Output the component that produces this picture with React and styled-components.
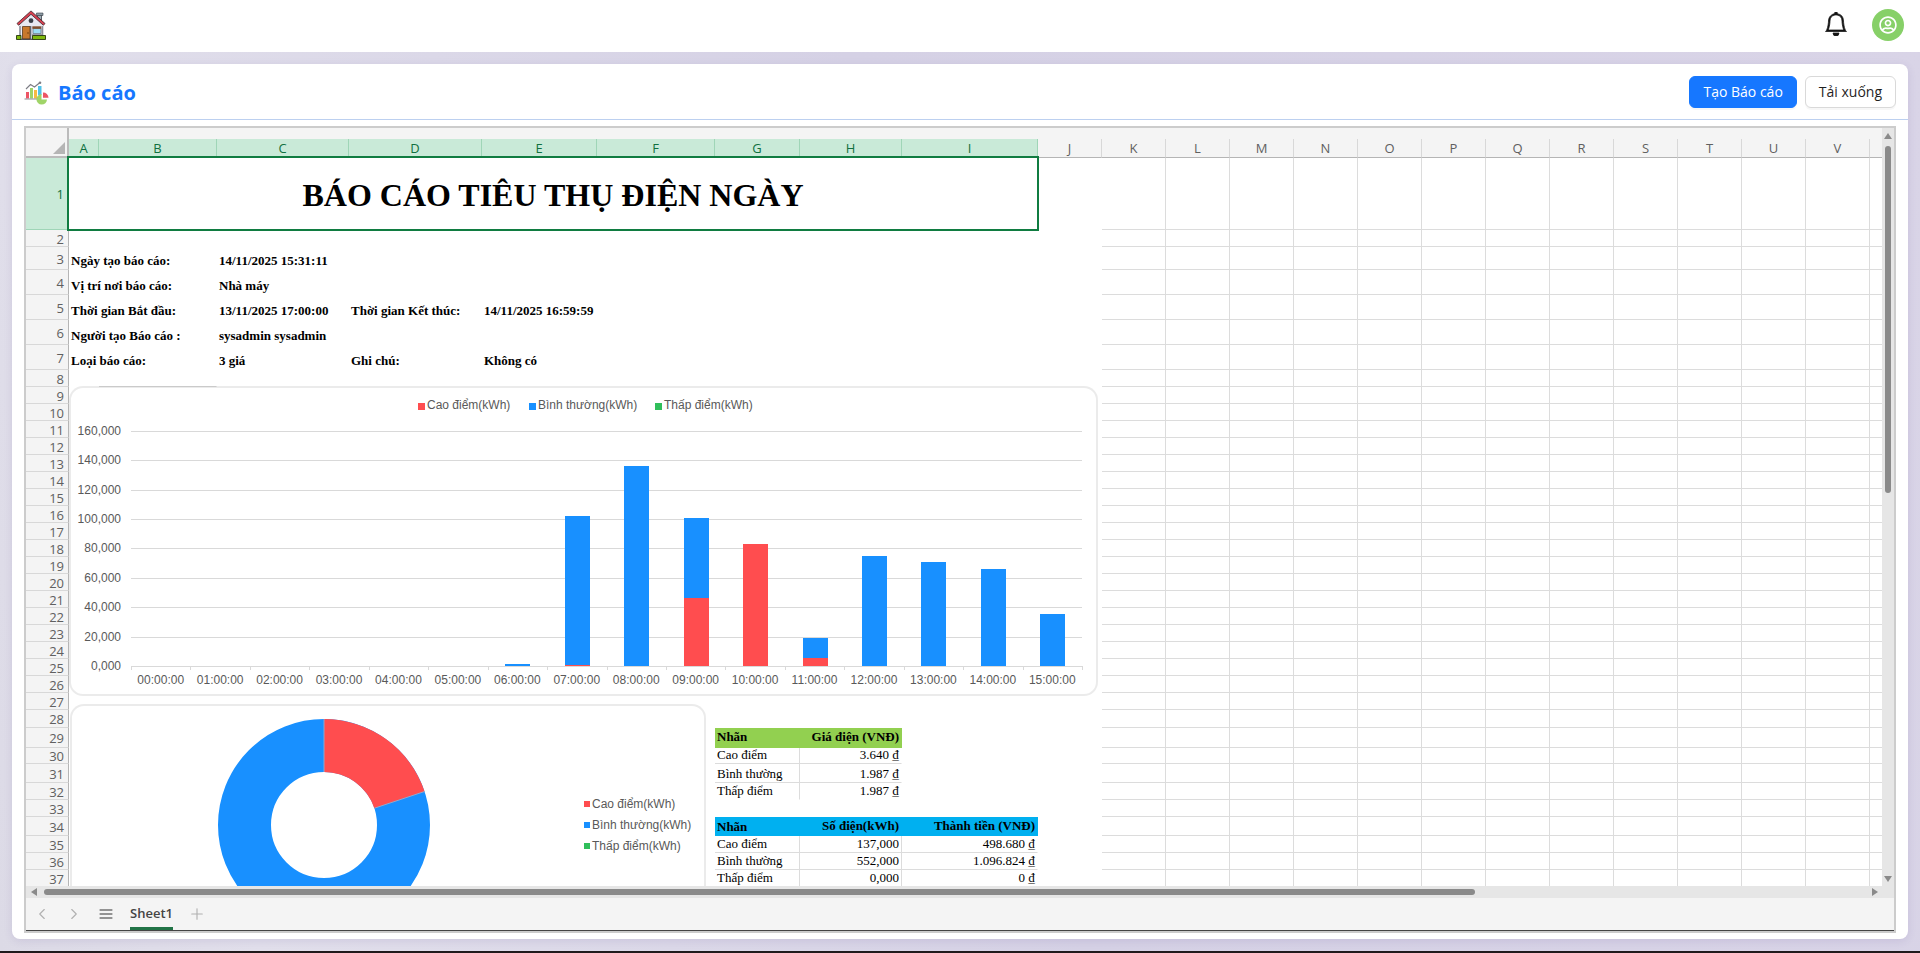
import React from 'react';
import styled, { createGlobalStyle, css } from 'styled-components';
import { BsBell } from 'react-icons/bs';
import { FaRegUserCircle } from 'react-icons/fa';
import { FiChevronLeft, FiChevronRight, FiMenu, FiPlus } from 'react-icons/fi';

const RED = '#ff4d4f';
const BLUE = '#1890ff';
const GREEN = '#30bf5b';

const GlobalStyle = createGlobalStyle`
  * {
    box-sizing: border-box;
  }

  html,
  body,
  #root {
    height: 100%;
  }

  body {
    margin: 0;
    font-family: 'Open Sans', 'Noto Sans', sans-serif;
    font-size: 14px;
    color: #1f1f1f;
  }

  button {
    font-family: inherit;
  }
`;

const Page = styled.div`
  display: flex;
  flex-direction: column;
  height: 100vh;
  overflow: hidden;
  border-bottom: 2px solid #201a1c;
  background: linear-gradient(75deg, #dcdae6 0%, #e1dfeb 12%, #d5d1e5 50%, #d9d4e7 100%);
`;

const TopBar = styled.header`
  display: flex;
  flex: none;
  align-items: center;
  justify-content: space-between;
  height: 52px;
  padding: 0 16px 2px;
  background: #fff;
`;

const HomeLink = styled.a`
  display: flex;
`;

const TopActions = styled.div`
  display: flex;
  align-items: center;
  gap: 24px;
`;

const IconButton = styled.button`
  display: flex;
  align-items: center;
  justify-content: center;
  width: 24px;
  height: 32px;
  padding: 0 0 2px;
  border: none;
  background: none;
  color: #141414;
  cursor: pointer;
`;

const Avatar = styled(IconButton)`
  width: 32px;
  padding: 0;
  border-radius: 50%;
  background: #87d068;
  color: #fff;
`;

const Card = styled.main`
  display: flex;
  flex: 1;
  flex-direction: column;
  min-height: 0;
  margin: 12px;
  border-radius: 8px;
  background: #fff;
  box-shadow: 0 2px 8px rgba(80, 60, 140, 0.12);
`;

const CardHeader = styled.div`
  display: flex;
  flex: none;
  align-items: center;
  justify-content: space-between;
  height: 56px;
  padding: 0 12px;
  border-bottom: 1px solid #bcd0f0;
`;

const CardTitle = styled.h1`
  display: flex;
  align-items: center;
  gap: 8px;
  margin: 0;
  padding-top: 2px;
  font-size: 20px;
  line-height: 24px;
  font-weight: 700;
  color: #1677ff;
`;

const ButtonRow = styled.div`
  display: flex;
  gap: 8px;
`;

const Button = styled.button`
  height: 32px;
  padding: 0 13px;
  border: 1px solid ${props => (props.$primary ? '#1677ff' : '#d9d9d9')};
  border-radius: 6px;
  background: ${props => (props.$primary ? '#1677ff' : '#fff')};
  box-shadow: 0 2px 0 rgba(5, 5, 5, 0.03);
  color: ${props => (props.$primary ? '#fff' : '#1f1f1f')};
  font-size: 14px;
  cursor: pointer;
`;

const Workbook = styled.section`
  display: flex;
  flex: 1;
  flex-direction: column;
  min-height: 0;
  margin: 6px 12px;
  border: 2px solid #ccc;
  background: #f4f4f4;
`;

const SheetArea = styled.div`
  display: grid;
  flex: 1;
  grid-template-columns: minmax(0, 1fr) 12px;
  grid-template-rows: minmax(0, 1fr) 12px;
  min-height: 0;
  background: #e6e6e6;
`;

const Viewport = styled.div`
  position: relative;
  overflow: hidden;
  background: #fff;
`;

const Grid = styled.table`
  border-collapse: separate;
  border-spacing: 0;
  table-layout: fixed;
  width: 0;
`;

const OutlineBar = styled.td`
  height: 11px;
  padding: 0;
  background: #f4f4f4;
`;

const Corner = styled.td`
  padding: 0 2px 2px 0;
  border-right: 2px solid #bbb;
  border-bottom: 2px solid #bbb;
  background: #f4f4f4;
  text-align: right;
  vertical-align: bottom;
  line-height: 0;
`;

const ColHead = styled.th`
  height: 19px;
  padding: 0;
  border-right: 1px solid ${props => (props.$selected ? '#9fd5b7' : '#d8d8d8')};
  border-bottom: 1px solid #b5b5b5;
  background: ${props => (props.$selected ? '#c9ead8' : '#f4f4f4')};
  color: ${props => (props.$selected ? '#107040' : '#606060')};
  font-size: 13px;
  line-height: 16px;
  font-weight: 400;
`;

const RowHead = styled.th`
  height: ${props => props.$height}px;
  padding: 2px 4px 0 0;
  border-right: 1px solid #b5b5b5;
  border-bottom: 1px solid ${props => (props.$selected ? '#9fd5b7' : '#d8d8d8')};
  background: ${props => (props.$selected ? '#c9ead8' : '#f4f4f4')};
  color: ${props => (props.$selected ? '#107040' : '#606060')};
  font-size: 13px;
  line-height: 13px;
  font-weight: 400;
  text-align: right;
`;

const lines = {
  b: css`border-bottom-color: #dcdcdc;`,
  r: css`border-right-color: #dcdcdc;`,
  br: css`
    border-right-color: #dcdcdc;
    border-bottom-color: #dcdcdc;
  `,
};

const Cell = styled.td`
  padding: ${props => (props.$title ? '2px 2px 0' : '0 2px 1px')};
  border: 0 solid transparent;
  border-right-width: 1px;
  border-bottom-width: 1px;
  ${props => lines[props.$lines]}
  background: ${props => props.$fill || 'none'};
  color: #000;
  font-family: 'Liberation Serif', serif;
  font-size: ${props => (props.$title ? 32 : 13)}px;
  line-height: ${props => (props.$title ? 36 : 14)}px;
  font-weight: ${props => (props.$bold ? 700 : 400)};
  text-align: ${props => props.$align || 'left'};
  vertical-align: ${props => (props.$middle ? 'middle' : 'bottom')};
  white-space: nowrap;
`;

/* floats over A1:I1 */
const Selection = styled.div`
  position: absolute;
  top: 28px;
  left: 41px;
  width: 972px;
  height: 75px;
  border: 2px solid #107c41;
  pointer-events: none;
`;

const ChartFrame = styled.figure`
  position: absolute;
  top: ${props => props.$top}px;
  left: ${props => props.$left}px;
  width: ${props => props.$width}px;
  height: ${props => props.$height}px;
  margin: 0;
  overflow: hidden;
  border: 2px solid rgba(0, 0, 0, 0.08);
  border-radius: 14px;
  background: #fff;
  background-clip: padding-box;

  svg {
    display: block;
    font-family: 'Liberation Sans', sans-serif;
    font-size: 12px;
    fill: #595959;
  }
`;

const VScroll = styled.div`
  display: flex;
  flex-direction: column;
  align-items: center;
  justify-content: space-between;
  padding: 4px 0 3px;
`;

const HScroll = styled.div`
  display: flex;
  align-items: center;
  justify-content: space-between;
  padding: 0 3px 0 4px;
`;

const Track = styled.div`
  flex: 1;
  margin: 6px;

  &::before {
    content: '';
    display: block;
    width: ${props => (props.$vertical ? '6px' : '78.6%')};
    height: ${props => (props.$vertical ? '48%' : '6px')};
    border-radius: 3px;
    background: #8a8a8a;
  }
`;

const TabBar = styled.nav`
  display: flex;
  flex: none;
  align-items: center;
  height: 33px;
  border-bottom: 1px solid #444;
`;

const TabButton = styled.button`
  display: flex;
  align-items: center;
  justify-content: center;
  width: 32px;
  height: 30px;
  padding: 0;
  border: none;
  background: none;
  color: ${props => (props.$dark ? '#333' : '#b0b0b0')};
`;

const SheetTab = styled.button`
  align-self: stretch;
  margin: 0 8px;
  padding: 0;
  border: none;
  border-bottom: 3px solid #217346;
  background: none;
  color: #444;
  font-size: 13px;
  font-weight: 600;
`;

const COLUMNS = [30, 118, 132, 133, 115, 118, 85, 102, 136].concat(Array(14).fill(64));
const ROW_HEIGHTS = {
  1: 72, 3: 23, 4: 25, 5: 25, 6: 25, 7: 25, 28: 18, 29: 20, 30: 16, 31: 19, 34: 19,
};
const ROW_COUNT = 37;

const meta = (text, span) => ({ text, span, $bold: true });
const head = (text, fill, $align, $middle = true) => ({ text, $fill: fill, $align, $bold: true, $middle });
const LIME = '#92d050';
const SKY = '#00b0f0';

const CELLS = {
  A1: { text: 'BÁO CÁO TIÊU THỤ ĐIỆN NGÀY', span: 9, $title: true, $bold: true, $align: 'center', $middle: true },
  A3: meta('Ngày tạo báo cáo:', 2),
  C3: meta('14/11/2025 15:31:11'),
  A4: meta('Vị trí nơi báo cáo:', 2),
  C4: meta('Nhà máy'),
  A5: meta('Thời gian Bắt đầu:', 2),
  C5: meta('13/11/2025 17:00:00'),
  D5: meta('Thời gian Kết thúc:'),
  E5: meta('14/11/2025 16:59:59'),
  A6: meta('Người tạo Báo cáo :', 2),
  C6: meta('sysadmin sysadmin'),
  A7: meta('Loại báo cáo:', 2),
  C7: meta('3 giá'),
  D7: meta('Ghi chú:'),
  E7: meta('Không có'),
  B8: { $lines: 'b' },
  G29: head('Nhãn', LIME),
  H29: head('Giá điện (VNĐ)', LIME, 'right'),
  G30: { text: 'Cao điểm', $lines: 'br' },
  H30: { text: '3.640 ₫', $align: 'right', $lines: 'b' },
  G31: { text: 'Bình thường', $lines: 'br' },
  H31: { text: '1.987 ₫', $align: 'right', $lines: 'b' },
  G32: { text: 'Thấp điểm', $lines: 'r' },
  H32: { text: '1.987 ₫', $align: 'right' },
  G34: head('Nhãn', SKY, 'left', false),
  H34: head('Số điện(kWh)', SKY, 'right'),
  I34: head('Thành tiền (VNĐ)', SKY, 'right'),
  G35: { text: 'Cao điểm', $lines: 'br' },
  H35: { text: '137,000', $align: 'right', $lines: 'br' },
  I35: { text: '498.680 ₫', $align: 'right', $lines: 'b' },
  G36: { text: 'Bình thường', $lines: 'br' },
  H36: { text: '552,000', $align: 'right', $lines: 'br' },
  I36: { text: '1.096.824 ₫', $align: 'right', $lines: 'b' },
  G37: { text: 'Thấp điểm', $lines: 'br' },
  H37: { text: '0,000', $align: 'right', $lines: 'br' },
  I37: { text: '0 ₫', $align: 'right', $lines: 'b' },
};

const SERIES = [
  { name: 'Cao điểm(kWh)', color: RED },
  { name: 'Bình thường(kWh)', color: BLUE },
  { name: 'Thấp điểm(kWh)', color: GREEN },
];

// [peak, normal] in MWh per hour
const HOURS = [
  [0, 0], [0, 0], [0, 0], [0, 0], [0, 0], [0, 0], [0, 1.4], [0.7, 101.4],
  [0, 136.2], [46.3, 54.5], [83, 0], [5.5, 13.5], [0, 75], [0, 71], [0, 66], [0, 35.4],
];

const colName = i => String.fromCharCode(65 + i);

const HomeIcon = () => (
  <svg width="30" height="30" viewBox="0 0 30 30">
    <path d="M21.500 5h4v7h-4z" fill="#9fb0b8" stroke="#3b3f49" strokeWidth=".8" />
    <path d="M20.500 3h6.500v2.500h-6.500z" fill="#8b9aa3" stroke="#3b3f49" strokeWidth=".6" />
    <path d="M3.500 14L15 4l11.500 10v12h-23z" fill="#e8e9f2" />
    <path d="M4 16v10M26.500 16v10" stroke="#8c8f9c" strokeWidth="1.600" />
    <path d="M1 13.500L15 .9l14 12.600-1.600 1.800L15 4.300 2.600 15.300z" fill="#d8404f" stroke="#3a2229" strokeWidth=".8" />
    <circle cx="15" cy="10.700" r="2.400" fill="#3a3f48" />
    <path d="M6.500 16.500h7.500V29H6.500z" fill="#c9782c" stroke="#5c3b1e" strokeWidth=".8" />
    <circle cx="12" cy="23" r=".8" fill="#6e3f12" />
    <path d="M14.700 16v13" stroke="#5d616e" strokeWidth="1.200" />
    <path d="M17 18.500h8v5h-8z" fill="#9bdcf5" stroke="#5b6b78" strokeWidth=".7" />
    <path d="M16.300 16.300h9v2.500h-9z" fill="#80502f" />
    <path d="M16 23.800h10v1.400H16z" fill="#9a9caa" />
    <path d="M.5 25.500H5V29.500H.5zM16.500 25.500h13v4h-13z" fill="#7fb80e" stroke="#25350c" strokeWidth=".9" />
    <path d="M5 29.300h12" stroke="#33333b" strokeWidth="1" />
  </svg>
);

const ReportIcon = () => (
  <svg width="26" height="24" viewBox="0 0 26 24" fill="none">
    <path d="M2 11h3v6.500H2z" fill="#ed5565" />
    <path d="M6 7h3v10.500H6z" fill="#a0d468" />
    <path d="M10 9h3v8.500h-3z" fill="#f6bb42" />
    <path d="M14 5h3.500v9H14z" fill="#4fc1e9" />
    <path d="M.5 18h13" stroke="#8b8b93" />
    <path d="M2 8l4.500-4.500 4 2.500L16 1.500" stroke="#7d7d85" strokeWidth="1.100" />
    <circle cx="16" cy="1.700" r="1.300" fill="#7d7d85" />
    <path d="M17.500 13v5.500H23a5.300 5.300 0 1 1-5.500-5.500z" fill="#a0d468" />
    <path d="M19 11.500a5.300 5.300 0 0 1 5.500 5.300H19z" fill="#ed5565" />
  </svg>
);

const Arrow = ({ points }) => (
  <svg width="8" height="8" viewBox="0 0 8 8">
    <polygon points={points} fill="#8a8a8a" />
  </svg>
);

const SheetRow = ({ row }) => {
  const cells = [];
  for (let col = 0; col < COLUMNS.length; ) {
    const { text, span = 1, ...look } = CELLS[colName(col) + row] || { $lines: col > 9 ? 'br' : undefined };
    cells.push(
      <Cell key={col} colSpan={span} {...look}>
        {text}
      </Cell>
    );
    col += span;
  }

  return (
    <tr>
      <RowHead scope="row" $height={ROW_HEIGHTS[row] || 17} $selected={row === 1}>
        {row}
      </RowHead>
      {cells}
    </tr>
  );
};

const BarChart = () => {
  const left = 60;
  const bottom = 278;
  const height = 235;
  const step = 951 / HOURS.length;
  const scale = value => Math.round((value / 160) * height);
  const legendX = [347, 458, 584];

  return (
    <svg width="1025" height="306" role="img" aria-label="Điện tiêu thụ theo giờ">
      {SERIES.map((s, i) => (
        <g key={s.name}>
          <rect x={legendX[i]} y="15" width="7" height="7" fill={s.color} />
          <text x={legendX[i] + 9} y="21">{s.name}</text>
        </g>
      ))}
      {Array.from({ length: 9 }, (_, i) => {
        const y = bottom - scale(i * 20);
        return (
          <g key={i}>
            <rect x={left} y={y} width="951" height="1" fill="#d9d9d9" />
            <text x={left - 10} y={y + 4} textAnchor="end">{i * 20},000</text>
          </g>
        );
      })}
      {HOURS.map(([peak, normal], i) => {
        const mid = left + step * (i + 0.5);
        const x = Math.round(mid - 12);
        return (
          <g key={i}>
            <rect x={Math.round(left + step * i)} y={bottom} width="1" height="4" fill="#d9d9d9" />
            <rect x={x} y={bottom - scale(peak + normal)} width="25" height={scale(peak + normal)} fill={BLUE} />
            <rect x={x} y={bottom - scale(peak)} width="25" height={scale(peak)} fill={RED} />
            <text x={mid} y={bottom + 18} textAnchor="middle">{String(i).padStart(2, '0')}:00:00</text>
          </g>
        );
      })}
      <rect x={left + 951} y={bottom} width="1" height="4" fill="#d9d9d9" />
    </svg>
  );
};

const DonutChart = () => {
  const angle = (137 / 689) * 2 * Math.PI;
  const point = r => `${r * Math.sin(angle)} ${-r * Math.cos(angle)}`;

  return (
    <svg width="632" height="240" role="img" aria-label="Tỷ lệ điện tiêu thụ">
      <g transform="translate(252 119)" stroke="#8fa8cf" strokeWidth="1">
        <circle r="79.5" fill="none" stroke={BLUE} strokeWidth="53" />
        <path d={`M0 -106A106 106 0 0 1 ${point(106)}L${point(53)}A53 53 0 0 0 0 -53z`} fill={RED} stroke="none" />
        <path d={`M0 -106V-53M${point(106)}L${point(53)}`} />
      </g>
      {SERIES.map((s, i) => (
        <g key={s.name}>
          <rect x="512" y={95 + i * 21} width="6" height="6" fill={s.color} />
          <text x="520" y={102 + i * 21}>{s.name}</text>
        </g>
      ))}
    </svg>
  );
};

const Sheet = () => (
  <Viewport>
    <Grid>
      <colgroup>
        <col style={{ width: 43 }} />
        {COLUMNS.map((width, i) => (
          <col key={i} style={{ width }} />
        ))}
      </colgroup>
      <thead>
        <tr>
          <Corner rowSpan={2}>
            <svg width="12" height="12" viewBox="0 0 12 12">
              <polygon points="12,0 12,12 0,12" fill="#b5b5b5" />
            </svg>
          </Corner>
          <OutlineBar colSpan={COLUMNS.length} />
        </tr>
        <tr>
          {COLUMNS.map((_, i) => (
            <ColHead key={i} scope="col" $selected={i < 9}>
              {i < 22 && colName(i)}
            </ColHead>
          ))}
        </tr>
      </thead>
      <tbody>
        {Array.from({ length: ROW_COUNT }, (_, i) => (
          <SheetRow key={i} row={i + 1} />
        ))}
      </tbody>
    </Grid>
    <Selection />
    <ChartFrame $top={258} $left={43} $width={1029} $height={310}>
      <BarChart />
    </ChartFrame>
    <ChartFrame $top={576} $left={44} $width={636} $height={310}>
      <DonutChart />
    </ChartFrame>
  </Viewport>
);

const App = () => (
  <>
    <GlobalStyle />
    <Page>
      <TopBar>
        <HomeLink href="#" aria-label="Trang chủ">
          <HomeIcon />
        </HomeLink>
        <TopActions>
          <IconButton aria-label="Thông báo">
            <BsBell size={24} strokeWidth={0.5} />
          </IconButton>
          <Avatar aria-label="Tài khoản">
            <FaRegUserCircle size={18} />
          </Avatar>
        </TopActions>
      </TopBar>
      <Card>
        <CardHeader>
          <CardTitle>
            <ReportIcon />
            Báo cáo
          </CardTitle>
          <ButtonRow>
            <Button $primary>Tạo Báo cáo</Button>
            <Button>Tải xuống</Button>
          </ButtonRow>
        </CardHeader>
        <Workbook>
          <SheetArea>
            <Sheet />
            <VScroll>
              <Arrow points="4,1 8,7 0,7" />
              <Track $vertical />
              <Arrow points="0,1 8,1 4,7" />
            </VScroll>
            <HScroll>
              <Arrow points="1,4 7,0 7,8" />
              <Track />
              <Arrow points="1,0 7,4 1,8" />
            </HScroll>
          </SheetArea>
          <TabBar>
            <TabButton aria-label="Trang trước">
              <FiChevronLeft size={18} strokeWidth={1.5} />
            </TabButton>
            <TabButton aria-label="Trang sau">
              <FiChevronRight size={18} strokeWidth={1.5} />
            </TabButton>
            <TabButton $dark aria-label="Danh sách trang">
              <FiMenu size={16} strokeWidth={1.5} />
            </TabButton>
            <SheetTab>Sheet1</SheetTab>
            <TabButton aria-label="Thêm trang">
              <FiPlus size={18} strokeWidth={1.5} />
            </TabButton>
          </TabBar>
        </Workbook>
      </Card>
    </Page>
  </>
);

export default App;
